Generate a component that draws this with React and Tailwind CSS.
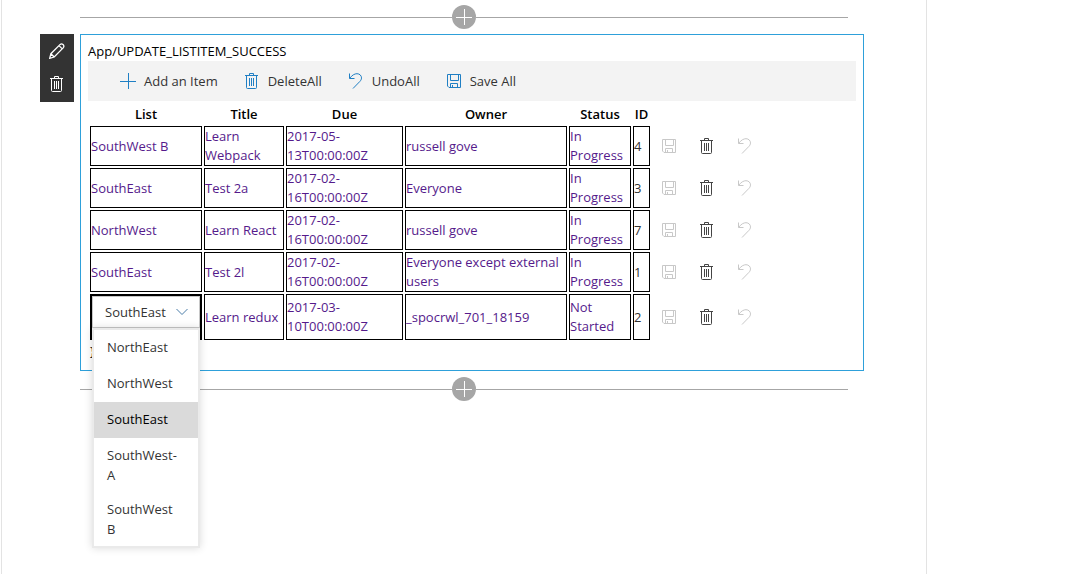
import { useState } from "react";

const rows = [
  { list: "SouthWest B", title: "Learn Webpack", due: "2017-05-13T00:00:00Z", owner: "russell gove", status: "In Progress", id: 4 },
  { list: "SouthEast", title: "Test 2a", due: "2017-02-16T00:00:00Z", owner: "Everyone", status: "In Progress", id: 3 },
  { list: "NorthWest", title: "Learn React", due: "2017-02-16T00:00:00Z", owner: "russell gove", status: "In Progress", id: 7 },
  { list: "SouthEast", title: "Test 2l", due: "2017-02-16T00:00:00Z", owner: "Everyone except external users", status: "In Progress", id: 1 },
  { list: "SouthEast", title: "Learn redux", due: "2017-03-10T00:00:00Z", owner: "_spocrwl_701_18159", status: "Not Started", id: 2, editing: true },
];

const lists = ["NorthEast", "NorthWest", "SouthEast", "SouthWest-A", "SouthWest B"];

function Icon({ children }) {
  return (
    <svg className="block size-4 shrink-0" viewBox="0 0 16 16" fill="none" stroke="currentColor" aria-hidden="true">
      {children}
    </svg>
  );
}

function AddIcon() {
  return <Icon><path d="M0 8.5h16M8.5 0v16" /></Icon>;
}

function TrashIcon() {
  return (
    <Icon>
      <path d="M1 2.5h13M5.5 2.5v-2h4v2M2.5 2.5v12q0 1 1 1h8q1 0 1-1v-12M5.500 5v8M7.500 5v8M9.500 5v8" />
    </Icon>
  );
}

function UndoIcon() {
  return (
    <Icon>
      <path d="M1.500 0.500v5h5M1.800 5.200C4 2.200 6.600 0.700 9 0.700c2.700 0 4.500 2 4.500 4.200 0 1.400-.7 2.600-1.700 3.600L5 15.500" />
    </Icon>
  );
}

function SaveIcon() {
  return (
    <Icon>
      <path d="M1.500 1.500h13v13h-11.500l-1.500-1.500zM4.500 1.500v6h8v-6M4.500 14.500v-4h7v4M6.500 12v2.500" />
    </Icon>
  );
}

function PencilIcon() {
  return (
    <Icon>
      <path
        strokeWidth="1.3"
        d="M0.700 15.300l1.200-4.600L11.200 1.400q1.300-1.200 2.800.2t.4 3L5.200 14zM1.900 10.700L5.200 14M10 2.600l3.300 3.300"
      />
    </Icon>
  );
}

function Divider() {
  return (
    <div className="mr-4 flex items-center">
      <span className="h-px flex-1 bg-[#a6a6a6]" />
      <button type="button" aria-label="Add web part" className="flex size-6 items-center justify-center rounded-full bg-[#a6a6a6] text-white">
        <AddIcon />
      </button>
      <span className="h-px flex-1 bg-[#a6a6a6]" />
    </div>
  );
}

function Command({ icon, label }) {
  return (
    <button type="button" className="flex items-center gap-2 text-[#333]">
      <span className="text-[#1f7fc4]">{icon}</span>
      {label}
    </button>
  );
}

function ListPicker({ value, onChange }) {
  return (
    <>
      <div className="relative h-8">
        <select
          aria-label="List"
          value={value}
          onChange={(e) => onChange(e.target.value)}
          className="block h-8 w-full appearance-none border border-[#c8c8c8] bg-white pl-3 text-[#333] outline-none"
        >
          {lists.map((l) => <option key={l}>{l}</option>)}
        </select>
        <svg className="pointer-events-none absolute top-2.5 right-3 h-3 w-3 text-[#4a7da8]" viewBox="0 0 12 12" fill="none" stroke="currentColor" aria-hidden="true">
          <path d="M0.500 3l5.500 5.500L11.500 3" />
        </svg>
      </div>
      <ul role="listbox" aria-label="List choices" className="absolute top-8 left-0 z-10 w-full border-2 border-[#eaeaea] bg-white text-[#333] shadow-[0_0_8px_rgba(0,0,0,0.15)]">
        {lists.map((l) => (
          <li
            key={l}
            role="option"
            aria-selected={l === value}
            onClick={() => onChange(l)}
            className={
              l === value
                ? "min-h-9 bg-[#dadada] py-[7px] pr-4 pl-[13px] leading-5 text-black"
                : "min-h-9 py-[7px] pr-4 pl-[13px] leading-5"
            }
          >
            {l}
          </li>
        ))}
      </ul>
    </>
  );
}

const cell = "border border-black p-0 text-[#551a8b]";

export default function App() {
  const [picked, setPicked] = useState("SouthEast");
  return (
    <div className="min-h-screen bg-white pl-px font-['Open_Sans','Noto_Sans',sans-serif] text-[13px] leading-[19px] text-black">
      <main className="min-h-screen max-w-[926px] border-x border-[#e3e3e3] pt-[5px] pr-[62px] pl-[38px]">
        <div className="pl-10"><Divider /></div>
        <div className="mt-[5px] mb-1.5 flex items-start gap-1.5">
          <div className="flex h-[68px] w-[34px] flex-col items-center justify-around bg-[#333] pb-0.5 text-white">
            <button type="button" aria-label="Edit web part"><PencilIcon /></button>
            <button type="button" aria-label="Delete web part"><TrashIcon /></button>
          </div>
          <section className="min-w-0 flex-1 border border-[#2ea0da] px-[7px] pt-[7px] pb-[9px]">
            <p>App/UPDATE_LISTITEM_SUCCESS</p>
            <div className="flex h-10 items-center gap-[26px] bg-[#f3f3f3] px-8">
              <Command icon={<AddIcon />} label="Add an Item" />
              <Command icon={<TrashIcon />} label="DeleteAll" />
              <Command icon={<UndoIcon />} label="UndoAll" />
              <Command icon={<SaveIcon />} label="Save All" />
            </div>
            <table className="table-fixed border-separate border-spacing-0.5">
              <colgroup>
                <col className="w-[112px]" />
                <col className="w-[80px]" />
                <col className="w-[117px]" />
                <col className="w-[162px]" />
                <col className="w-[62px]" />
                <col className="w-[17px]" />
                <col className="w-[110px]" />
              </colgroup>
              <thead>
                <tr>
                  {["List", "Title", "Due", "Owner", "Status", "ID"].map((h) => (
                    <th key={h} scope="col" className="p-0 pt-0.5 font-semibold">{h}</th>
                  ))}
                  <td />
                </tr>
              </thead>
              <tbody>
                {rows.map((r) => (
                  <tr key={r.id} className={r.editing ? "h-[46px]" : "h-10"}>
                    {r.editing ? (
                      <td className="relative border-2 border-black p-0 align-top">
                        <ListPicker value={picked} onChange={setPicked} />
                      </td>
                    ) : (
                      <td className={cell}>{r.list}</td>
                    )}
                    <td className={cell}>{r.title}</td>
                    <td className={cell}>{r.due}</td>
                    <td className={cell}>{r.owner}</td>
                    <td className={cell}>{r.status}</td>
                    <td className="border border-black p-0 text-[#333]">{r.id}</td>
                    <td className="p-0 pl-[9px]">
                      <div className="flex gap-[22px]">
                        <button type="button" disabled aria-label="Save" className="text-[#c8c8c8]"><SaveIcon /></button>
                        <button type="button" aria-label="Delete" className="text-[#444]"><TrashIcon /></button>
                        <button type="button" disabled aria-label="Undo" className="text-[#c8c8c8]"><UndoIcon /></button>
                      </div>
                    </td>
                  </tr>
                ))}
              </tbody>
            </table>
            <p className="pl-0.5">{"}"}</p>
          </section>
        </div>
        <div className="pl-10"><Divider /></div>
      </main>
    </div>
  );
}
